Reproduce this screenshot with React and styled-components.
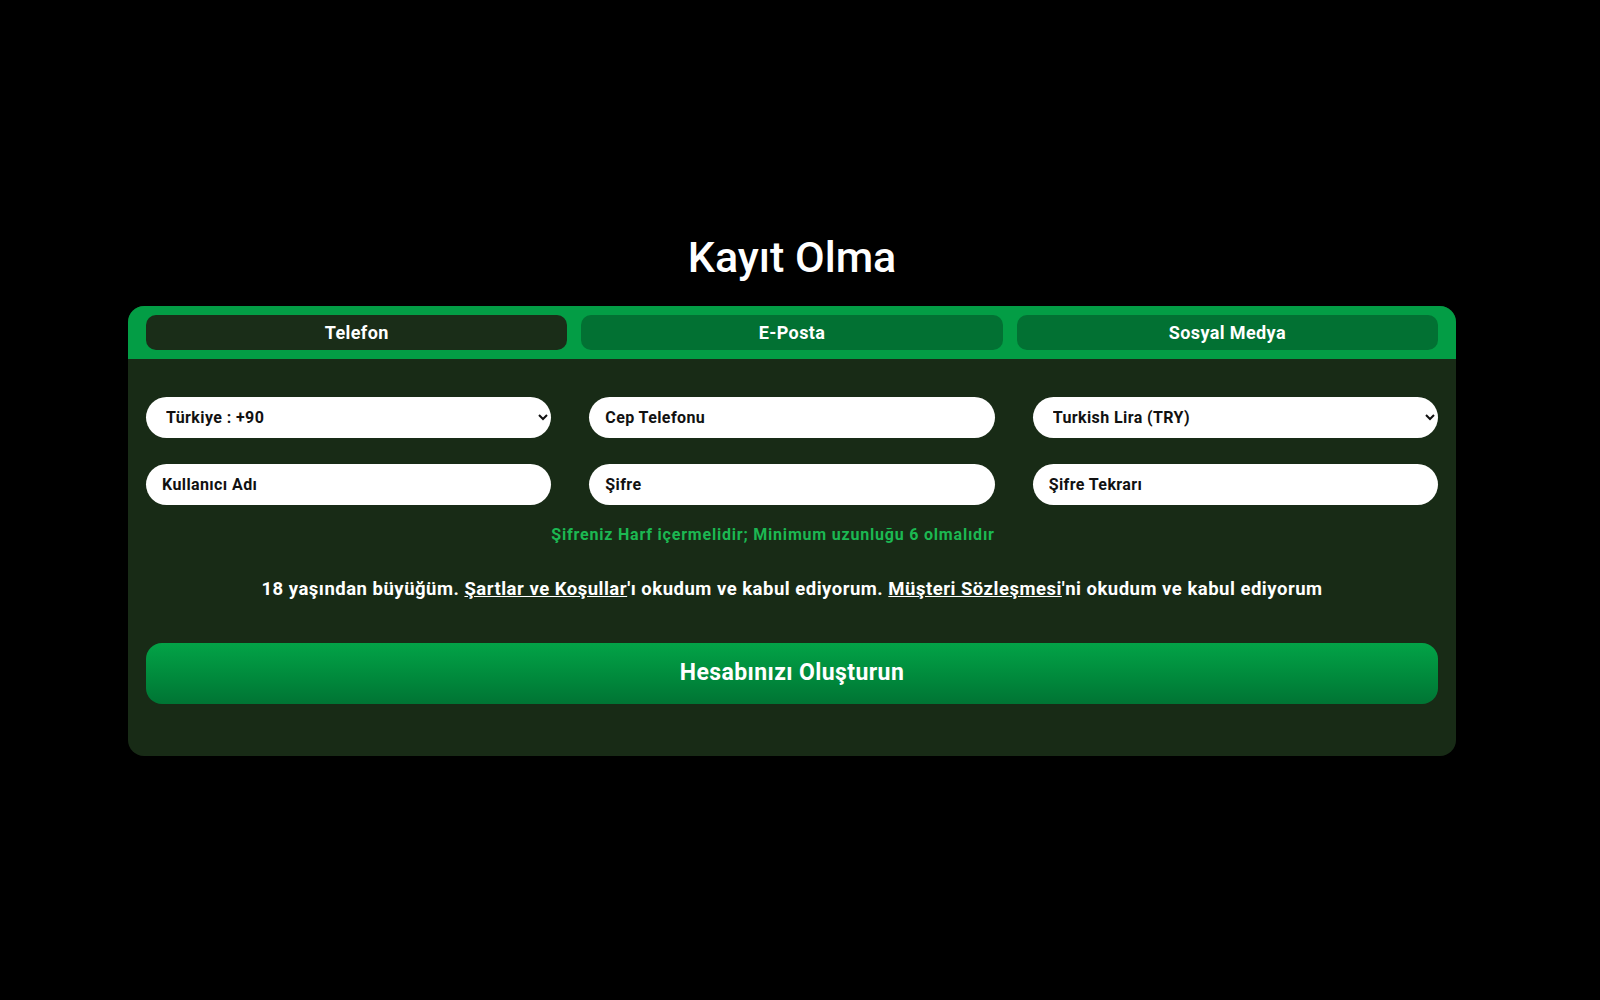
import React, { useState } from "react";
import styled, { createGlobalStyle } from "styled-components";

const GlobalStyle = createGlobalStyle`
  body {
    margin: 0;
    background: #000;
    font-family: Roboto, "Liberation Sans", sans-serif;
  }
`;

const tabs = ["Telefon", "E-Posta", "Sosyal Medya"];

function App() {
  const [active, setActive] = useState(0);

  return (
    <>
      <GlobalStyle />
      <StPage>
        <StTitle>Kayıt Olma</StTitle>
        <StCard>
          <StTabBar>
            {tabs.map((tab, i) => (
              <StTab key={tab} $active={i === active} onClick={() => setActive(i)}>
                {tab}
              </StTab>
            ))}
          </StTabBar>
          <StBody>
            <StFieldGrid>
              <StSelect defaultValue="tr">
                <option value="tr">Türkiye : +90</option>
              </StSelect>
              <StInput placeholder="Cep Telefonu" />
              <StSelect defaultValue="try">
                <option value="try">Turkish Lira (TRY)</option>
              </StSelect>
              <StInput placeholder="Kullanıcı Adı" />
              <StInput type="password" placeholder="Şifre" />
              <StInput type="password" placeholder="Şifre Tekrarı" />
            </StFieldGrid>
            <StHint>Şifreniz Harf içermelidir; Minimum uzunluğu 6 olmalıdır</StHint>
            <StTerms>
              18 yaşından büyüğüm. <StLink href="#">Şartlar ve Koşullar</StLink>'ı okudum ve kabul
              ediyorum. <StLink href="#">Müşteri Sözleşmesi</StLink>'ni okudum ve kabul ediyorum
            </StTerms>
            <StSubmit>Hesabınızı Oluşturun</StSubmit>
          </StBody>
        </StCard>
      </StPage>
    </>
  );
}

export default App;

const StPage = styled.div`
  min-height: 1000px;
  box-sizing: border-box;
  padding: 228px 16px 0 0;
`;

const StTitle = styled.h1`
  margin: 0 0 20px;
  text-align: center;
  color: #fff;
  font-size: 43px;
  line-height: 58px;
  font-weight: 500;
`;

const StCard = styled.div`
  width: 1328px;
  margin: 0 auto;
  border-radius: 16px;
  overflow: hidden;
  background: #182b16;
`;

const StTabBar = styled.div`
  display: grid;
  grid-template-columns: repeat(3, 1fr);
  gap: 14px;
  padding: 9px 18px;
  background: #039d45;
`;

const StTab = styled.button`
  height: 35px;
  border: none;
  border-radius: 10px;
  cursor: pointer;
  background: ${(p) => (p.$active ? "#1a2d18" : "#027133")};
  color: #fff;
  font-family: inherit;
  font-size: 18px;
  letter-spacing: 0.4px;
  font-weight: 700;
`;

const StBody = styled.div`
  padding: 38px 18px 52px;
`;

const StFieldGrid = styled.div`
  display: grid;
  grid-template-columns: repeat(3, 1fr);
  column-gap: 38px;
  row-gap: 26px;
`;

const StInput = styled.input`
  height: 41px;
  box-sizing: border-box;
  border: none;
  border-radius: 21px;
  padding: 0 16px;
  background: #fff;
  color: #111;
  font-family: inherit;
  font-size: 16px;
  letter-spacing: 0.4px;
  font-weight: 700;
  outline: none;

  &::placeholder {
    color: #111;
    opacity: 1;
  }
`;

const StSelect = styled.select`
  height: 41px;
  box-sizing: border-box;
  border: none;
  border-radius: 21px;
  padding: 0 8px 0 16px;
  background: #fff;
  color: #111;
  font-family: inherit;
  font-size: 16px;
  letter-spacing: 0.4px;
  font-weight: 700;
  outline: none;
`;

const StHint = styled.p`
  margin: 20px 0 0;
  padding-right: 38px;
  text-align: center;
  color: #1cb852;
  font-size: 16px;
  letter-spacing: 0.8px;
  line-height: 20px;
  font-weight: 700;
`;

const StTerms = styled.p`
  margin: 33px 0 0;
  text-align: center;
  color: #fff;
  font-size: 18.5px;
  letter-spacing: 0.5px;
  line-height: 22px;
  font-weight: 700;
`;

const StLink = styled.a`
  color: #fff;
  text-decoration: underline;
`;

const StSubmit = styled.button`
  display: block;
  width: 100%;
  height: 61px;
  margin-top: 43px;
  padding-bottom: 4px;
  border: none;
  border-radius: 16px;
  cursor: pointer;
  background: linear-gradient(180deg, #03a347 0%, #008a3c 55%, #007434 100%);
  color: #fff;
  font-family: inherit;
  font-size: 23px;
  letter-spacing: 0.4px;
  font-weight: 700;
`;
